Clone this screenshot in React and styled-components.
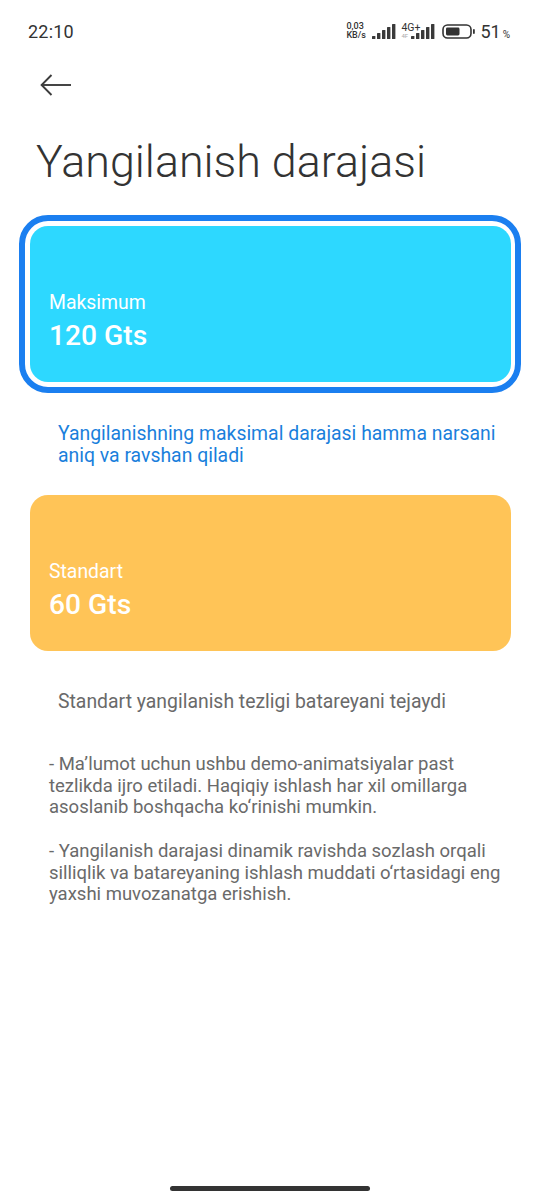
import React from 'react';
import styled, { createGlobalStyle } from 'styled-components';

const GlobalStyle = createGlobalStyle`
  html, body {
    margin: 0;
    padding: 0;
    background: #fff;
  }
  * {
    box-sizing: border-box;
  }
`;

function Signal() {
  const heights = [3, 6, 9, 12, 15];
  return (
    <svg width="24" height="15" viewBox="0 0 24 15">
      {heights.map((h, i) => (
        <rect key={i} x={i * 5} y={15 - h} width="3.4" height={h} rx="0.6" fill="#3a3a3a" />
      ))}
    </svg>
  );
}

function Battery() {
  return (
    <svg width="33" height="15" viewBox="0 0 33 15">
      <rect x="1" y="1" width="28" height="13" rx="4.5" fill="none" stroke="#333" strokeWidth="1.6" />
      <rect x="4" y="3.6" width="13.5" height="7.8" rx="1.4" fill="#333" />
      <rect x="31" y="5" width="1.8" height="5" rx="0.9" fill="#333" />
    </svg>
  );
}

function App() {
  return (
    <Page>
      <GlobalStyle />
      <StatusBar>
        <Clock>22:10</Clock>
        <StatusIcons>
          <Speed>
            <span>0,03</span>
            <span>KB/s</span>
          </Speed>
          <Signal />
          <NetworkGroup>
            <NetworkLabel>4G+</NetworkLabel>
            <SimLabel>4F</SimLabel>
            <Signal />
          </NetworkGroup>
          <Battery />
          <Percent>
            51<small>%</small>
          </Percent>
        </StatusIcons>
      </StatusBar>

      <BackButton type="button" aria-label="Orqaga">
        <svg width="32" height="22" viewBox="0 0 32 22" fill="none" stroke="#3c3c3c" strokeWidth="1.9">
          <path d="M31 11H2" />
          <path d="M11.5 1L1.6 11l9.9 10" />
        </svg>
      </BackButton>

      <Title>Yangilanish darajasi</Title>

      <Options>
        <OptionFrame $selected>
          <OptionCard $color="#2dd8ff">
            <OptionName>Maksimum</OptionName>
            <OptionRate>120 Gts</OptionRate>
          </OptionCard>
        </OptionFrame>
        <OptionNote $active>
          Yangilanishning maksimal darajasi hamma narsani aniq va ravshan qiladi
        </OptionNote>

        <OptionFrame>
          <OptionCard $color="#ffc457">
            <OptionName>Standart</OptionName>
            <OptionRate>60 Gts</OptionRate>
          </OptionCard>
        </OptionFrame>
        <OptionNote>Standart yangilanish tezligi batareyani tejaydi</OptionNote>
      </Options>

      <Details>
        <p>
          - Ma’lumot uchun ushbu demo-animatsiyalar past tezlikda ijro etiladi. Haqiqiy ishlash har
          xil omillarga asoslanib boshqacha ko‘rinishi mumkin.
        </p>
        <p>
          - Yangilanish darajasi dinamik ravishda sozlash orqali silliqlik va batareyaning ishlash
          muddati o‘rtasidagi eng yaxshi muvozanatga erishish.
        </p>
      </Details>

      <HomeBar />
    </Page>
  );
}

export default App;

const Page = styled.div`
  position: relative;
  width: 540px;
  height: 1200px;
  overflow: hidden;
  background: #fff;
  font-family: Roboto, 'Noto Sans', sans-serif;
  color: #333;
`;

const StatusBar = styled.div`
  display: flex;
  align-items: center;
  justify-content: space-between;
  height: 62px;
  padding: 0 30px 0 28px;
`;

const Clock = styled.div`
  font-size: 18px;
  font-weight: 400;
  letter-spacing: 0.2px;
  color: #333;
`;

const StatusIcons = styled.div`
  display: flex;
  align-items: center;
  gap: 5px;
`;

const Speed = styled.div`
  display: flex;
  flex-direction: column;
  width: 21px;
  font-size: 9px;
  font-weight: 500;
  line-height: 9px;
  white-space: nowrap;
`;

const NetworkGroup = styled.div`
  position: relative;
  display: flex;
  padding-left: 10px;
  margin-right: 2px;
`;

const NetworkLabel = styled.span`
  position: absolute;
  top: -2px;
  left: 0;
  font-size: 10.5px;
  line-height: 11px;
`;

const SimLabel = styled.span`
  position: absolute;
  bottom: 0;
  left: 0;
  font-size: 6px;
  line-height: 6px;
  color: #aaa;
`;

const Percent = styled.div`
  font-size: 18px;
  small {
    margin-left: 2px;
    font-size: 10px;
  }
`;

const BackButton = styled.button`
  display: block;
  height: 22px;
  margin: 12px 0 0 40px;
  padding: 0;
  border: 0;
  background: none;
`;

const Title = styled.h1`
  margin: 38px 0 0 36px;
  font-size: 44.8px;
  line-height: 56px;
  font-weight: 300;
  color: #333;
`;

const Options = styled.div`
  display: flex;
  flex-direction: column;
  margin-top: 25px;
  padding: 0 19px;
`;

const OptionFrame = styled.div`
  padding: 5px 4.5px;
  border: 6px solid ${(p) => (p.$selected ? '#1b7ff0' : 'transparent')};
  border-radius: 29px;
`;

const OptionCard = styled.div`
  display: flex;
  flex-direction: column;
  height: 156px;
  padding: 64px 20px 0 19.5px;
  border-radius: 18px;
  background: ${(p) => p.$color};
  color: #fff;
`;

const OptionName = styled.div`
  font-size: 19.4px;
  font-weight: 400;
  line-height: 26px;
`;

const OptionRate = styled.div`
  margin-top: 2px;
  font-size: 28.2px;
  font-weight: 500;
  line-height: 36px;
`;

const OptionNote = styled.p`
  margin: ${(p) => (p.$active ? '30px 0 17px' : '29px 0 0')};
  padding: 0 20px 0 39px;
  font-size: 19.4px;
  line-height: 22px;
  color: ${(p) => (p.$active ? '#1a7fdc' : '#6a6a6a')};
`;

const Details = styled.div`
  margin-top: 41px;
  padding: 0 30px 0 49px;
  font-size: 18.5px;
  line-height: 21.6px;
  color: #6a6a6a;
  p {
    margin: 0 0 22.4px;
  }
`;

const HomeBar = styled.div`
  position: absolute;
  left: 170px;
  bottom: 9px;
  width: 200px;
  height: 5px;
  border-radius: 3px;
  background: #333;
`;
